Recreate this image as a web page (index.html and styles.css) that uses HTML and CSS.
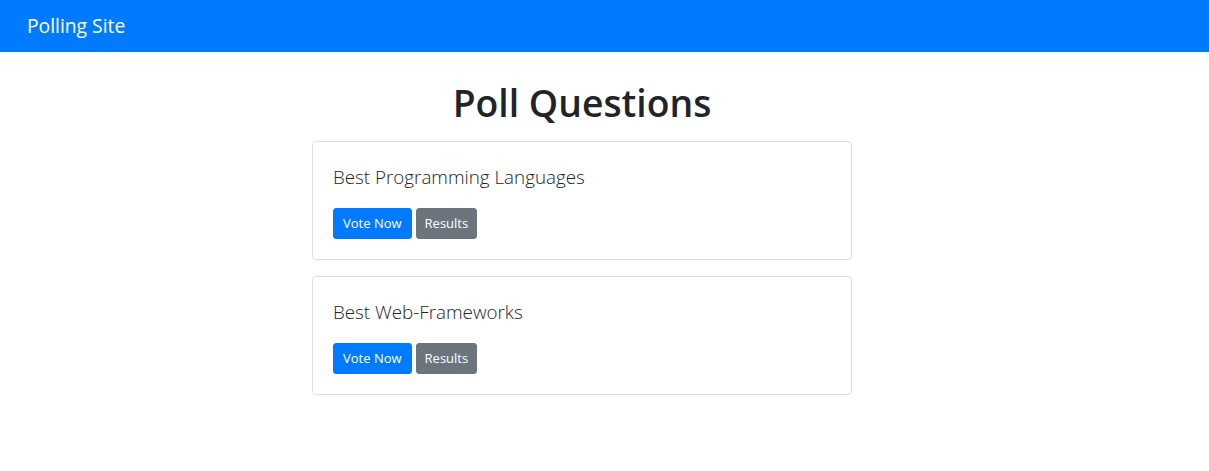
FILE: index.html
```html
<!DOCTYPE html>
<html lang="en">
<head>
<meta charset="utf-8">
<title>Polling Site</title>
<link rel="stylesheet" href="styles.css">
</head>
<body>
<nav class="navbar">
  <a class="brand" href="#">Polling Site</a>
</nav>
<main class="main">
  <h1 class="title">Poll Questions</h1>
  <div class="card">
    <h3 class="card-title">Best Programming Languages</h3>
    <div class="actions">
      <a class="btn btn-primary" href="#">Vote Now</a>
      <a class="btn btn-secondary" href="#">Results</a>
    </div>
  </div>
  <div class="card">
    <h3 class="card-title">Best Web-Frameworks</h3>
    <div class="actions">
      <a class="btn btn-primary" href="#">Vote Now</a>
      <a class="btn btn-secondary" href="#">Results</a>
    </div>
  </div>
</main>
</body>
</html>
```
FILE: styles.css
```css
* { box-sizing: border-box; }
html, body { margin: 0; padding: 0; }
body {
  font-family: "Open Sans", "Noto Sans", "Liberation Sans", sans-serif;
  color: #212529;
  background: #fff;
  font-size: 16px;
  line-height: 1.5;
}
.navbar {
  background: #007bff;
  height: 52px;
  display: flex;
  align-items: center;
  padding: 0 27px;
}
.brand {
  color: #fff;
  text-decoration: none;
  font-size: 19.3px;
  line-height: 30px;
  margin-top: -1px;
}
.main {
  width: 540px;
  margin-left: 312px;
  padding-top: 27px;
}
.title {
  margin: 0 0 14px;
  text-align: center;
  font-size: 37.3px;
  font-weight: 600;
  line-height: 48px;
}
.card {
  border: 1px solid rgba(0,0,0,.125);
  border-radius: 4px;
  padding: 20px;
  margin-bottom: 16px;
}
.card-title {
  margin: 0 0 16px;
  font-size: 18.8px;
  font-weight: 300;
  line-height: 30px;
}
.actions {
  display: flex;
  gap: 4px;
}
.btn {
  display: inline-block;
  color: #fff;
  text-decoration: none;
  font-size: 13px;
  line-height: 21px;
  padding: 4px 8px;
  border-radius: 3px;
  border: 1px solid transparent;
}
.btn-primary { background: #007bff; border-color: #007bff; padding: 4px 9px; }
.btn-secondary { background: #6c757d; border-color: #6c757d; }
```
